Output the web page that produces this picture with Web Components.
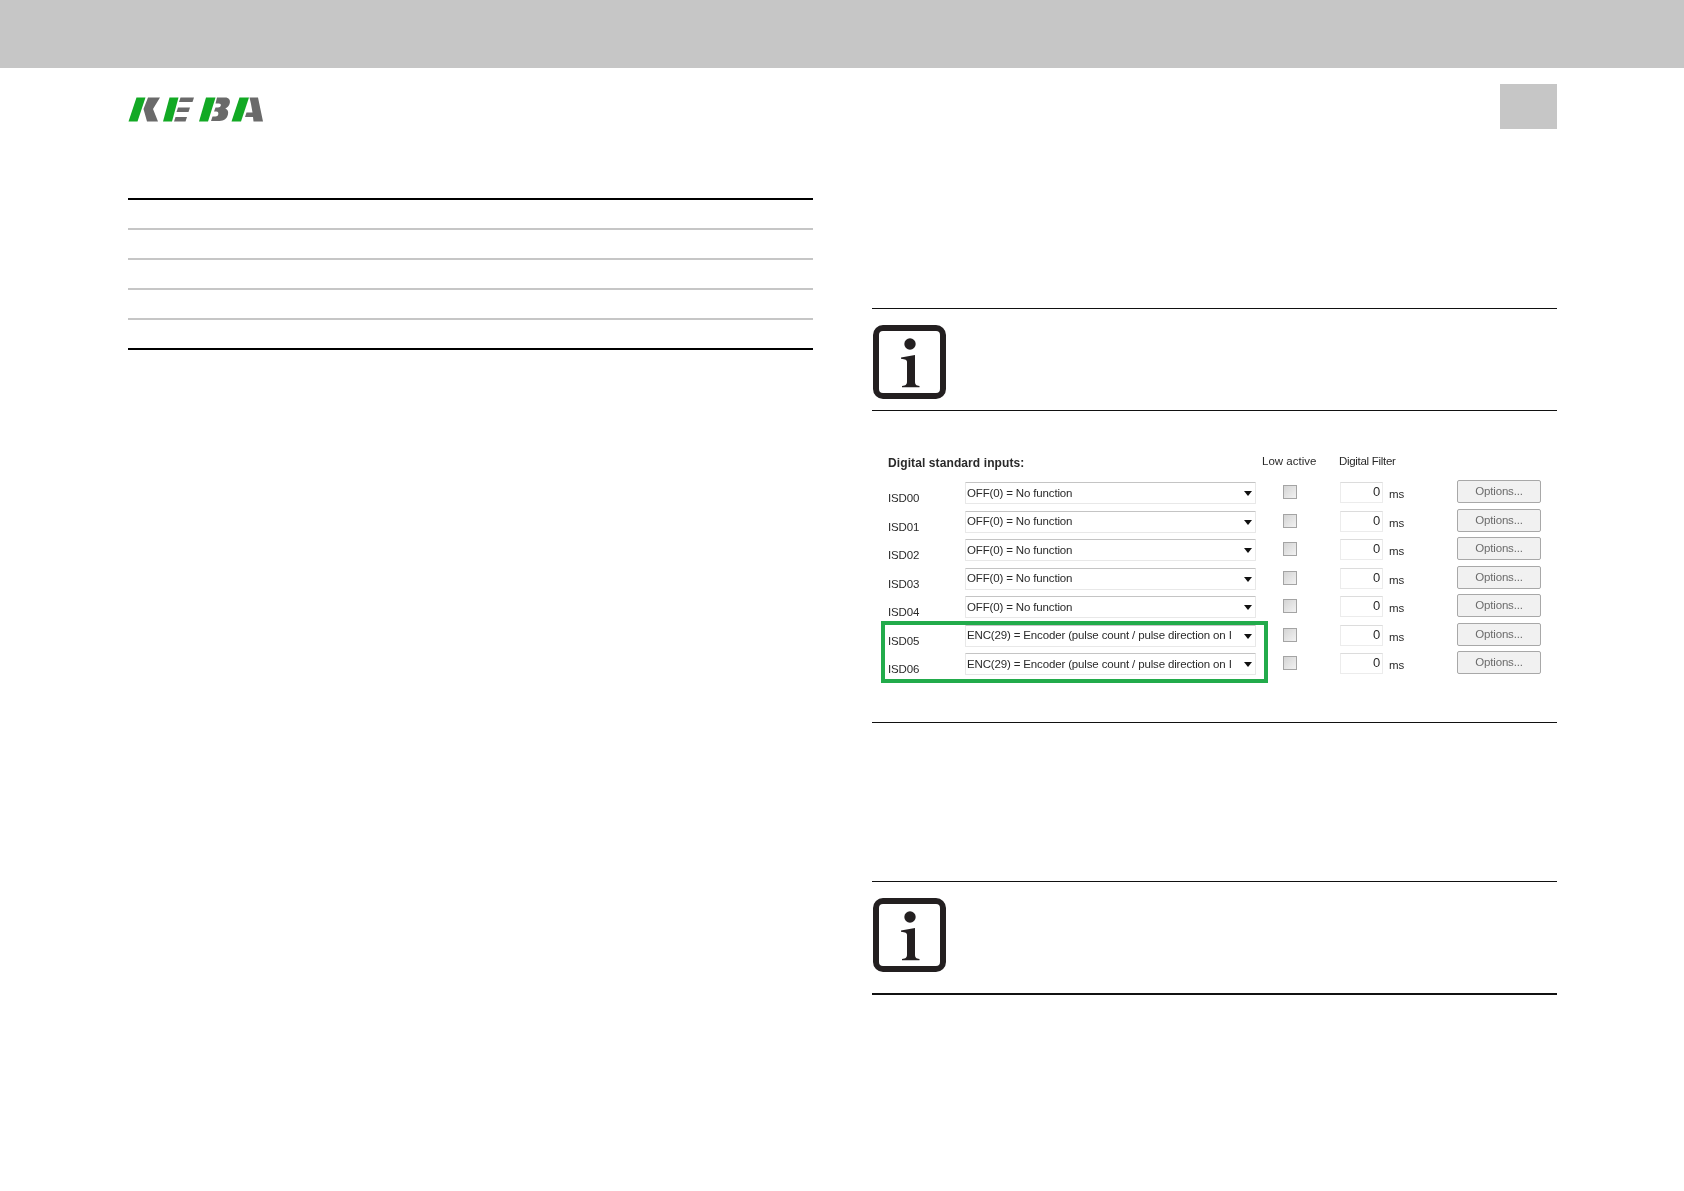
<!DOCTYPE html>
<html>
<head>
<meta charset="utf-8">
<title>KEBA</title>
<style>
    html, body { margin: 0; background: #fff; }
    body { font-family: 'Liberation Sans', Arial, sans-serif; }
</style>
</head>
<body>
<manual-page>
    <keba-logo slot="logo"></keba-logo>

    <spec-table slot="left"></spec-table>

    <info-note slot="right" height="103"></info-note>
    <input-form slot="right">
        <input-row label="ISD00"></input-row>
        <input-row label="ISD01"></input-row>
        <input-row label="ISD02"></input-row>
        <input-row label="ISD03"></input-row>
        <input-row label="ISD04"></input-row>
        <input-row label="ISD05" encoder></input-row>
        <input-row label="ISD06" encoder></input-row>
    </input-form>
    <info-note slot="right" height="114" strong style="margin-top:158px"></info-note>
</manual-page>

<script>
// Whole page: grey band, logo row and the two text columns
class ManualPage extends HTMLElement {
    constructor() {
        super();
        this.attachShadow({ mode: 'open' }).innerHTML = `
            <style>
                :host { display: block; width: 1684px; height: 1191px; overflow: hidden; }
                .band { height: 68px; background: #c6c6c6; }
                .top {
                    display: flex; justify-content: space-between; align-items: flex-start;
                    height: 45px; padding: 16px 127px 0 128px;
                }
                .page-box { width: 57px; height: 45px; background: #c6c6c6; }
                .cols {
                    display: grid; grid-template-columns: 685px 685px; column-gap: 59px;
                    padding-left: 128px;
                }
                .left { padding-top: 69px; }
                .right { padding-top: 179px; }
            </style>
            <div class="band"></div>
            <div class="top">
                <slot name="logo"></slot>
                <div class="page-box"></div>
            </div>
            <div class="cols">
                <div class="left"><slot name="left"></slot></div>
                <div class="right"><slot name="right"></slot></div>
            </div>`;
    }
}

// KEBA logo, green slanted bars with the grey letter parts
class KebaLogo extends HTMLElement {
    constructor() {
        super();
        this.attachShadow({ mode: 'open' }).innerHTML = `
            <style>
                :host { display: block; margin-top: 13px; width: 137px; height: 25px; }
                svg { display: block; }
            </style>
            <svg width="137" height="25" viewBox="0 0 137 25" role="img" aria-label="KEBA logo">
                <g fill="#12a924">
                    <polygon points="8.500,0.500 17.500,0.500 9.500,24.500 0.500,24.500"/>
                    <polygon points="41.500,0.500 50.500,0.500 44,24.500 35,24.500"/>
                    <polygon points="78,0.500 87.500,0.500 80,24.500 71,24.500"/>
                    <polygon points="111.500,0.500 121,0.500 113,24.500 103.500,24.500"/>
                </g>
                <g fill="#6a6a6a">
                    <polygon points="20,0.500 32,0.500 25,12 30,24.500 19,24.500 15.500,12"/>
                    <polygon points="52.500,0.500 66,0.500 64.500,5 51,5"/>
                    <polygon points="50,10.500 62,10.500 60.500,15 48.500,15"/>
                    <polygon points="47.500,20 59,20 57.500,24.500 46,24.500"/>
                    <path d="M89 0.500H97c4 0 5.500 2.500 4.800 5.500-.5 2.500-2 4.500-4.500 5.500 2.500 1 3.300 3 2.700 5.800-.9 4.500-4 6.700-8.500 6.700H83l1.500-4.500h3c1.500 0 2.500-1 2.800-2.300.3-1.400-.3-2.700-2-2.700H86l1.500-4h2.500c1.600 0 2.500-.8 2.800-2 .3-1.300-.4-2-2-2h-3.300z"/>
                    <polygon points="121.500,0.500 130,0.500 135,24.500 125.500,24.500 125,20 117,20 118.500,15.500 124.500,15.500 123,7"/>
                </g>
            </svg>`;
    }
}

// Empty table: heavy rule on top and bottom, four light ones between
class SpecTable extends HTMLElement {
    constructor() {
        super();
        let rows = '';
        for (let i = 0; i < 4; i++) {
            rows += '<div class="row"></div>';
        }
        this.attachShadow({ mode: 'open' }).innerHTML = `
            <style>
                :host { display: block; border-top: 2px solid #000; border-bottom: 2px solid #000; }
                .row { height: 28px; border-bottom: 2px solid #c6c6c6; }
                .last { height: 28px; }
            </style>
            ${rows}<div class="last"></div>`;
    }
}

// Note block with the boxed "i" symbol between two rules
class InfoNote extends HTMLElement {
    constructor() {
        super();
        let total = this.getAttribute('height');
        let bottom = this.hasAttribute('strong') ? 2 : 1;
        this.attachShadow({ mode: 'open' }).innerHTML = `
            <style>
                :host { display: block; box-sizing: border-box; height: ${total}px;
                        border-top: 1px solid #111; border-bottom: ${bottom}px solid #111;
                        padding: 16px 0 0 1px; }
                svg { display: block; }
            </style>
            <svg width="74" height="75" viewBox="0 0 74 75" role="img" aria-label="Information">
                <rect x="3" y="3" width="67" height="68" rx="7" fill="#fff" stroke="#231f20" stroke-width="6"/>
                <circle cx="37" cy="19" r="5.700" fill="#231f20"/>
                <path fill="#231f20" d="M28 32.500L42 30v26.500c0 3 1 4 4.500 4.500v1.200H29v-1.200c3.800-.5 5-1.500 5-4.500V37c0-2-1.500-2.800-6-3.300z"/>
            </svg>`;
    }
}

// Screenshot of the digital inputs dialog
const formTemplate = document.createElement('template');
formTemplate.innerHTML = `
    <style>
        :host {
            display: block; position: relative; height: 311px;
            font: 11.5px 'Liberation Sans', Arial, sans-serif; letter-spacing: -0.15px; color: #2a2a2a;
            border-bottom: 1px solid #111;
        }
        .blurred { filter: blur(0.4px); }
        .head {
            display: grid; grid-template-columns: 374px 77px 1fr;
            padding: 43px 0 0 16px; height: 28px; line-height: 14px;
        }
        .head b { font-size: 12px; letter-spacing: 0.1px; font-weight: bold; padding-top: 2px; }
        .low { letter-spacing: 0; }
        .filter { letter-spacing: -0.3px; }
        .rows { display: flex; flex-direction: column; }
        .mark {
            position: absolute; left: 9px; top: 210px; width: 379px; height: 54px;
            border: 4px solid #22ab4b;
        }
    </style>
    <div class="blurred">
        <div class="head">
            <b>Digital standard inputs:</b>
            <span class="low">Low active</span>
            <span class="filter">Digital Filter</span>
        </div>
        <div class="rows"><slot></slot></div>
    </div>
    <div class="mark"></div>`;

class InputForm extends HTMLElement {
    constructor() {
        super();
        this.attachShadow({ mode: 'open' }).appendChild(formTemplate.content.cloneNode(true));
    }
}

// One line of the dialog: label, combo, checkbox, filter value, button
class InputRow extends HTMLElement {
    constructor() {
        super();
        let label = this.getAttribute('label');
        let value = this.hasAttribute('encoder')
            ? 'ENC(29) = Encoder (pulse count / pulse direction on I'
            : 'OFF(0) = No function';
        this.attachShadow({ mode: 'open' }).innerHTML = `
            <style>
                :host {
                    display: grid; height: 28.5px; align-items: start;
                    grid-template-columns: 77px 291px 27px 14px 43px 43px 74px 84px;
                    padding-left: 16px; box-sizing: border-box;
                }
                .name { padding-top: 9px; line-height: 14px; }
                .combo {
                    box-sizing: border-box; height: 22px; display: flex; align-items: center;
                    justify-content: space-between; padding: 0 3px 1px 1px;
                    background: #fff; border: 1px solid #e8e8e8; border-top-color: #c4c4c4;
                    border-radius: 1px; white-space: nowrap;
                }
                .arrow { width: 0; height: 0; border: 4px solid transparent; border-top: 5px solid #111; border-bottom: 0; margin-top: 2px; flex: none; }
                .check {
                    grid-column: 4; box-sizing: border-box; width: 14px; height: 14px; margin-top: 3px;
                    border: 1px solid #a4a4a4; background: linear-gradient(135deg, #d4d4d4, #f2f2f2);
                }
                .spin {
                    grid-column: 6; box-sizing: border-box; height: 21px; text-align: right;
                    padding: 0 2px 0 0; line-height: 18px;
                    border: 1px solid #ececec; border-top-color: #dcdcdc; font-size: 13px;
                }
                .ms { grid-column: 7; padding: 5px 0 0 6px; line-height: 14px; }
                .btn {
                    grid-column: 8; box-sizing: border-box; height: 23px; margin-top: -2px;
                    border: 1px solid #a8a8a8; border-radius: 2px; background: #f1f1f1;
                    text-align: center; line-height: 21px; color: #6c6c6c;
                }
            </style>
            <div class="name">${label}</div>
            <div class="combo"><span>${value}</span><i class="arrow"></i></div>
            <div class="check"></div>
            <div class="spin">0</div>
            <div class="ms">ms</div>
            <div class="btn">Options...</div>`;
    }
}

customElements.define('manual-page', ManualPage);
customElements.define('keba-logo', KebaLogo);
customElements.define('spec-table', SpecTable);
customElements.define('info-note', InfoNote);
customElements.define('input-form', InputForm);
customElements.define('input-row', InputRow);
</script>
</body>
</html>
